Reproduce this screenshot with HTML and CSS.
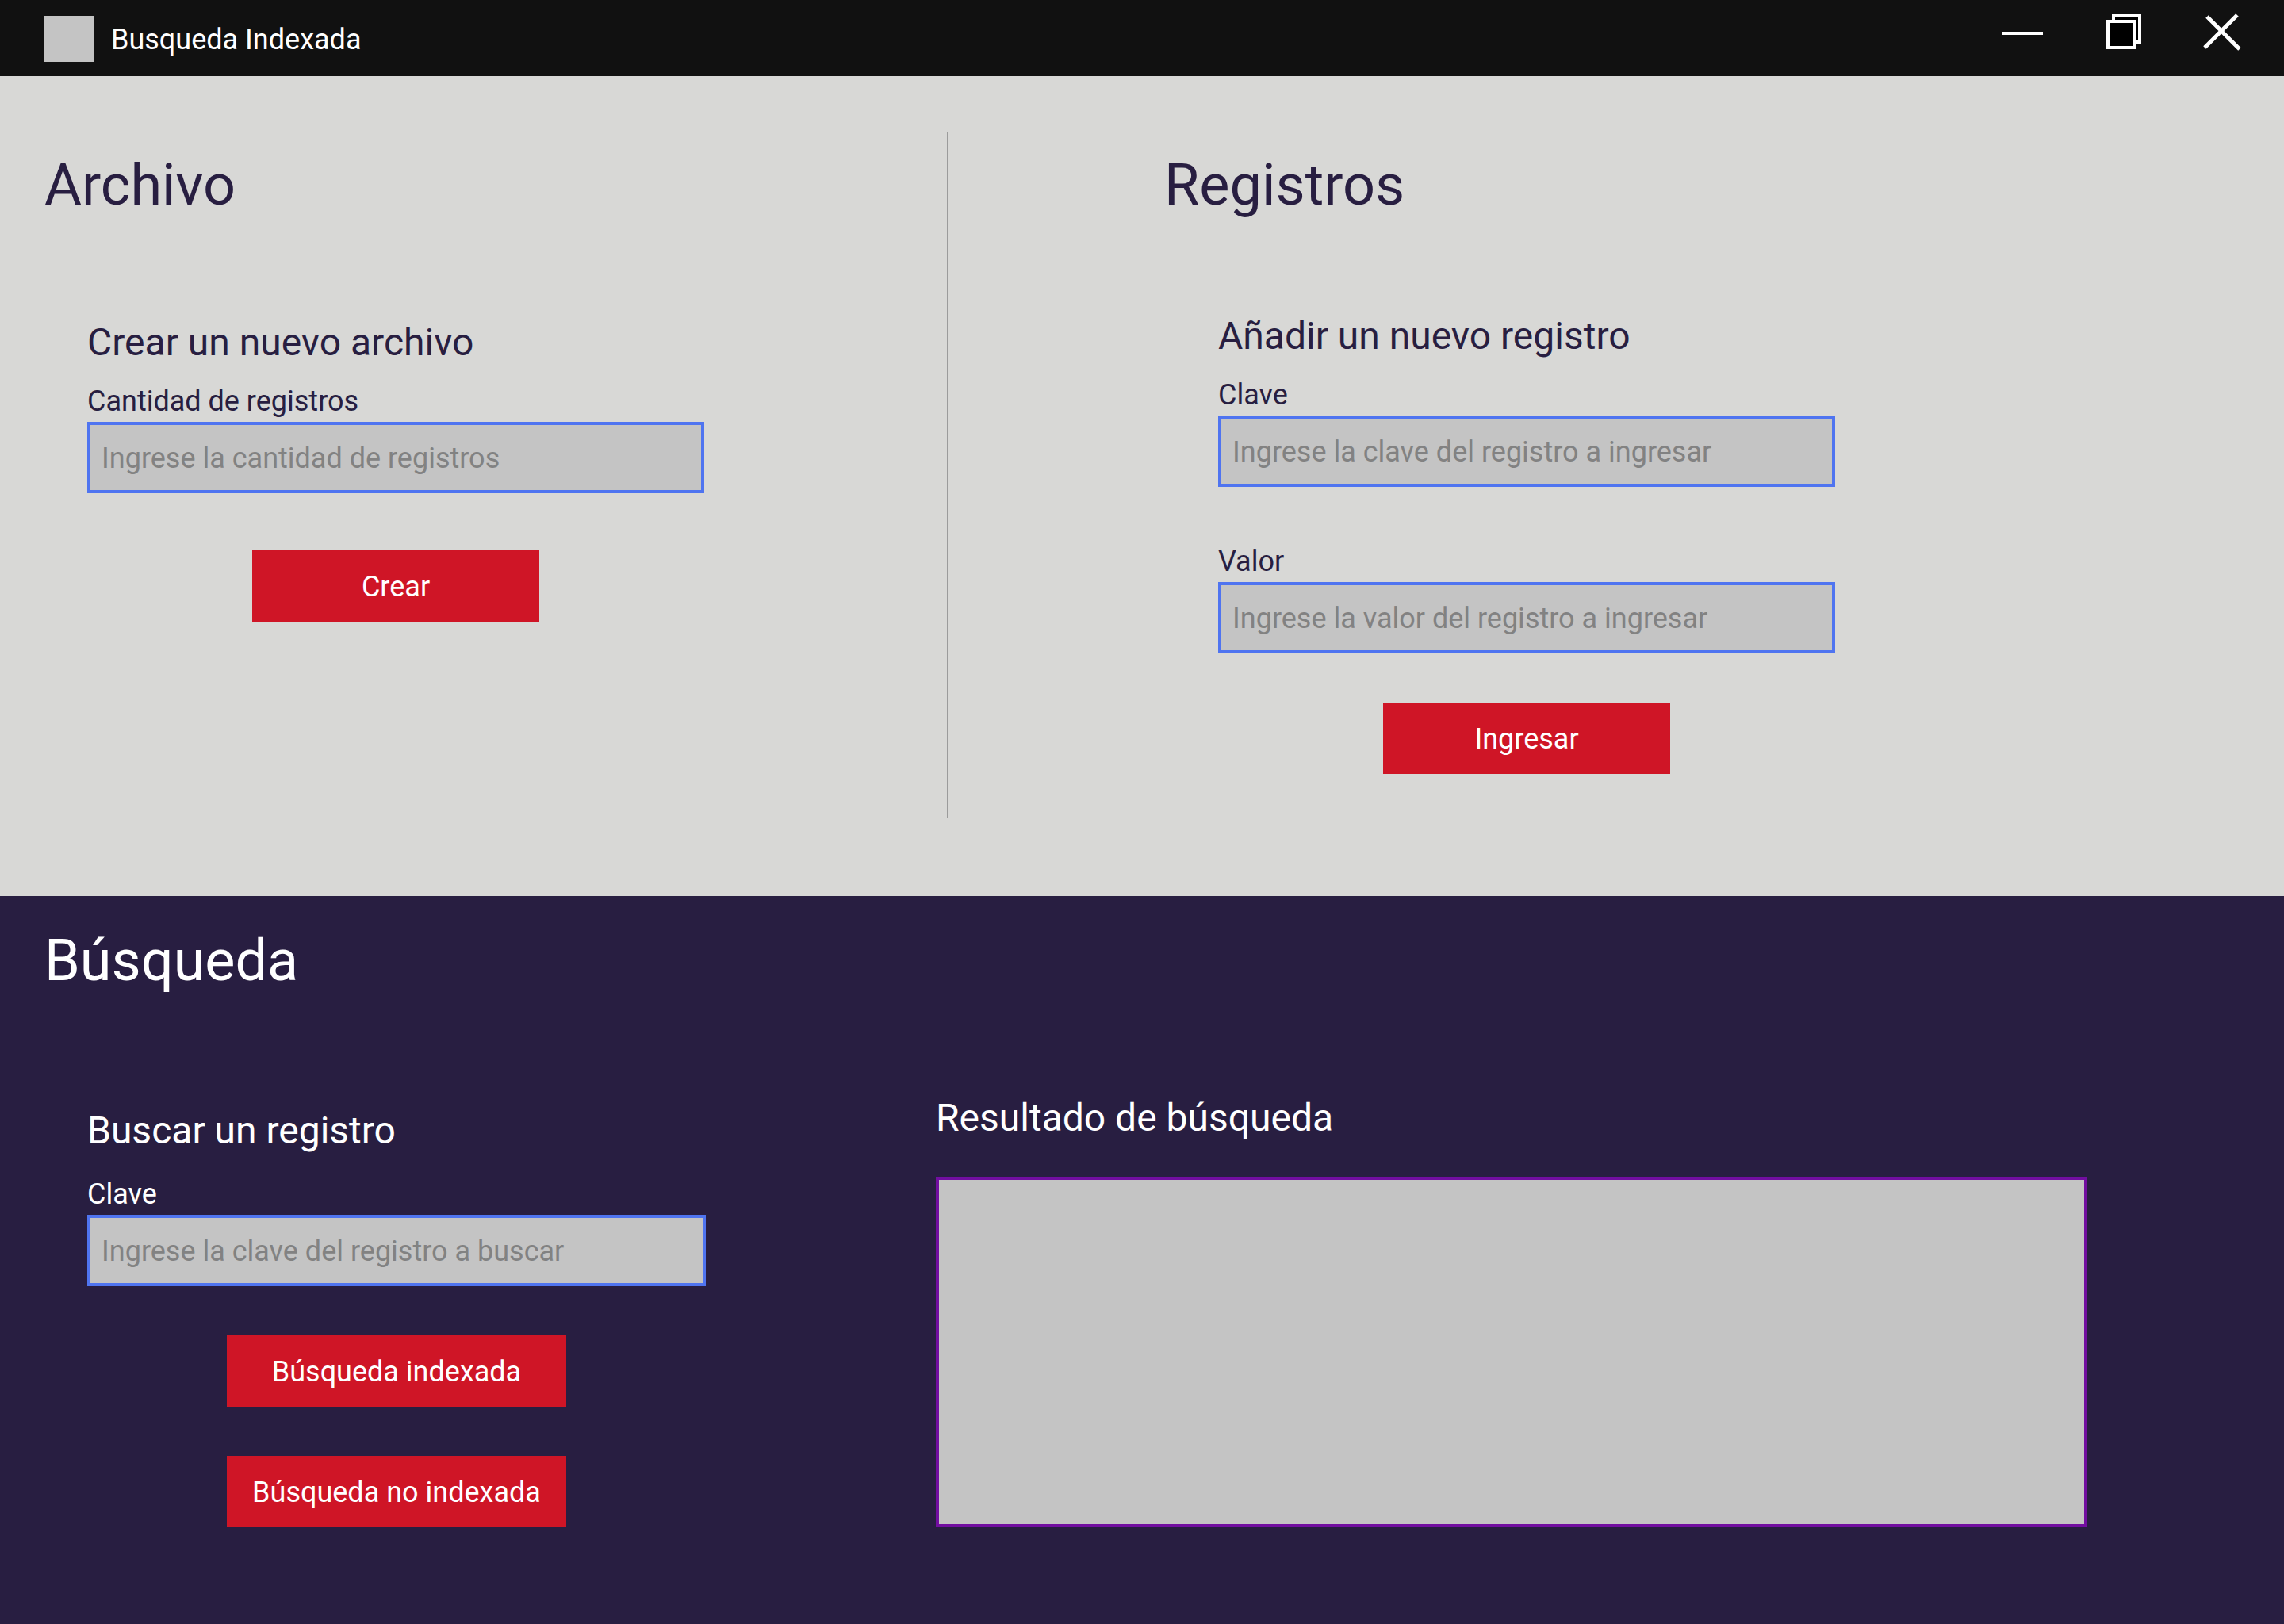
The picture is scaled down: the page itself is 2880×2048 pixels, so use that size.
FILE: index.html
```html
<!DOCTYPE html>
<html lang="es">
<head>
  <meta charset="utf-8">
  <meta name="viewport" content="width=device-width, initial-scale=1">
  <title>Busqueda Indexada</title>
  <link rel="stylesheet" href="styles.css">
</head>
<body>
  <header class="titlebar">
    <span class="titlebar-logo"></span>
    <span class="titlebar-name">Busqueda Indexada</span>
    <div class="window-controls">
      <button class="window-button" type="button" aria-label="Minimizar">
        <svg width="52" height="48" viewBox="0 0 52 48"><path d="M0 26H52" stroke="#fff" stroke-width="4"/></svg>
      </button>
      <button class="window-button" type="button" aria-label="Maximizar">
        <svg width="44" height="48" viewBox="0 0 44 48" fill="#000" stroke="#fff" stroke-width="4"><rect x="9" y="4" width="33" height="33"/><rect x="2" y="11" width="33" height="33"/></svg>
      </button>
      <button class="window-button" type="button" aria-label="Cerrar">
        <svg width="48" height="48" viewBox="0 0 48 48" stroke="#fff" stroke-width="5"><path d="M3 5L44 46M41 3L0 44"/></svg>
      </button>
    </div>
  </header>

  <main class="main">
    <div class="manage">
      <section class="panel panel-file">
        <h1 class="title">Archivo</h1>
        <form class="form form-file">
          <h2 class="subtitle">Crear un nuevo archivo</h2>
          <div class="field">
            <label class="label" for="cantidad">Cantidad de registros</label>
            <input class="input" id="cantidad" type="text" placeholder="Ingrese la cantidad de registros">
          </div>
          <button class="button" type="button">Crear</button>
        </form>
      </section>

      <div class="divider"></div>

      <section class="panel panel-records">
        <h1 class="title">Registros</h1>
        <form class="form form-records">
          <h2 class="subtitle">Añadir un nuevo registro</h2>
          <div class="field">
            <label class="label" for="clave">Clave</label>
            <input class="input" id="clave" type="text" placeholder="Ingrese la clave del registro a ingresar">
          </div>
          <div class="field">
            <label class="label" for="valor">Valor</label>
            <input class="input" id="valor" type="text" placeholder="Ingrese la valor del registro a ingresar">
          </div>
          <button class="button" type="button">Ingresar</button>
        </form>
      </section>
    </div>

    <section class="search">
      <h1 class="title">Búsqueda</h1>
      <div class="search-body">
        <form class="form form-search">
          <h2 class="subtitle">Buscar un registro</h2>
          <div class="field">
            <label class="label" for="buscar">Clave</label>
            <input class="input" id="buscar" type="text" placeholder="Ingrese la clave del registro a buscar">
          </div>
          <button class="button button-wide" type="button">Búsqueda indexada</button>
          <button class="button button-wide" type="button">Búsqueda no indexada</button>
        </form>
        <div class="result">
          <label class="subtitle" for="resultado">Resultado de búsqueda</label>
          <textarea class="result-box" id="resultado" readonly></textarea>
        </div>
      </div>
    </section>
  </main>
</body>
</html>
```

FILE: styles.css
```css
:root {
  --ink: #281e41;
  --paper: #d8d8d6;
  --field: #c4c4c4;
  --accent: #cf1526;
  --focus: #4f74f0;
}

* {
  box-sizing: border-box;
}

body {
  display: flex;
  flex-direction: column;
  min-height: 100vh;
  margin: 0;
  background: var(--ink);
  color: #fff;
  font-family: Roboto, "Liberation Sans", sans-serif;
  font-size: 36px;
  line-height: 44px;
}

/* Title bar */

.titlebar {
  display: flex;
  align-items: flex-start;
  padding: 20px 52px 18px 56px;
  background: #111;
}

.titlebar-logo {
  width: 62px;
  height: 58px;
  background: var(--field);
}

.titlebar-name {
  padding: 8px 0 0 22px;
}

.window-controls {
  display: flex;
  gap: 80px;
  margin: -4px 0 0 auto;
}

.window-button {
  padding: 0;
  border: 0;
  background: none;
}

.window-button svg {
  display: block;
  overflow: visible;
}

/* Shared pieces */

.title,
.subtitle {
  margin: 0;
  font-weight: 400;
}

.title {
  font-size: 72px;
  line-height: 86px;
}

.subtitle {
  font-size: 48px;
  line-height: 58px;
}

.form {
  display: flex;
  flex-direction: column;
  width: 100%;
  max-width: 778px;
}

.field {
  display: flex;
  flex-direction: column;
  gap: 4px;
  margin-top: 23px;
}

.field + .field {
  margin-top: 72px;
}

.input {
  width: 100%;
  height: 90px;
  padding: 2px 14px 0;
  border: 4px solid var(--focus);
  border-radius: 0;
  background: var(--field);
  color: var(--ink);
  font: inherit;
}

.input::placeholder {
  color: #828282;
  opacity: 1;
}

.button {
  align-self: center;
  width: 362px;
  height: 90px;
  margin-top: 62px;
  padding: 2px 0 0;
  border: 0;
  background: var(--accent);
  color: #fff;
  font: inherit;
}

.button-wide {
  width: 428px;
}

/* File and records */

.manage {
  display: grid;
  grid-template-columns: 1194fr 2px 1684fr;
  padding: 70px 0 98px;
  background: var(--paper);
  color: var(--ink);
}

.divider {
  background: #9b9b9b;
}

.panel {
  padding: 25px 56px 56px;
}

.panel-records {
  padding-left: 272px;
}

.form-file {
  margin: 126px 0 0 54px;
}

.form-file .button {
  margin-top: 72px;
}

.form-records {
  margin: 118px 0 0 68px;
}

/* Search */

.search {
  padding: 39px 0 122px;
}

.search > .title {
  padding-left: 56px;
}

.search-body {
  display: grid;
  grid-template-columns: 1180fr 1700fr;
  margin-top: 126px;
}

.form-search {
  max-width: 780px;
  margin: 16px 0 0 110px;
}

.form-search .field {
  margin-top: 29px;
}

.result {
  display: flex;
  flex-direction: column;
  gap: 45px;
  padding-right: 248px;
}

.result-box {
  flex: 1;
  width: 100%;
  padding: 14px;
  border: 4px solid #720ea0;
  border-radius: 0;
  background: var(--field);
  color: var(--ink);
  font: inherit;
  resize: none;
}
```
